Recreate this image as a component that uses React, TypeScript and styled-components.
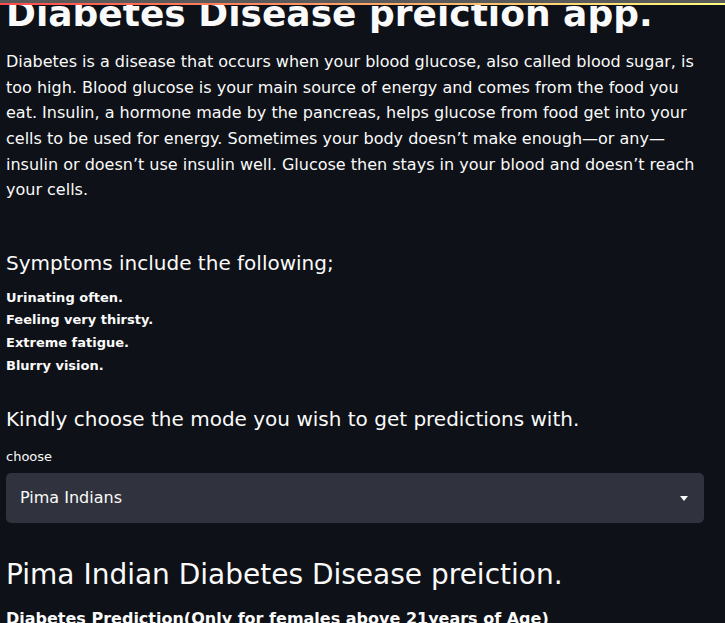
import React from "react";
import styled, { createGlobalStyle } from "styled-components";

const Global = createGlobalStyle`
  html, body { margin: 0; padding: 0; background: #0e1117; }
  body { font-family: "DejaVu Sans", sans-serif; color: #fafafa; overflow: hidden; }
  * { box-sizing: border-box; }
`;

const TopBar = styled.div`
  position: fixed;
  top: 0;
  left: 0;
  right: 0;
  height: 5px;
  background: #5a5a5a;
  z-index: 10;
  &::after {
    content: "";
    position: absolute;
    left: 0;
    right: 0;
    bottom: 0;
    height: 2px;
    background: linear-gradient(90deg, #ff4b4b, #fffd80);
  }
`;

const Main = styled.main`
  display: flex;
  flex-direction: column;
  padding: 0 21px 0 6px;
`;

const Title = styled.h1`
  margin: -8px 0 0;
  font-size: 36px;
  font-weight: 700;
  line-height: 1.2;
`;

const Para = styled.p`
  margin: 14px 0 0;
  font-size: 16px;
  line-height: 25.6px;
`;

const Heading = styled.h3<{ $top: number }>`
  margin: ${(p) => p.$top}px 0 0;
  font-size: 20px;
  font-weight: 400;
  line-height: 1.4;
`;

const Symptoms = styled.ul`
  list-style: none;
  margin: 10px 0 0;
  padding: 0;
  display: flex;
  flex-direction: column;
`;

const Symptom = styled.li`
  font-size: 13px;
  font-weight: 700;
  line-height: 22.7px;
`;

const Label = styled.label`
  margin-top: 15px;
  font-size: 13px;
  line-height: 18px;
`;

const Select = styled.div`
  margin-top: 7px;
  height: 50px;
  border-radius: 5px;
  background: #30323d;
  display: flex;
  align-items: center;
  justify-content: space-between;
  padding: 0 14px;
  font-size: 16px;
`;

const Caret = styled.svg`
  width: 12px;
  height: 12px;
  fill: #fafafa;
`;

const BigHeading = styled.h2`
  margin: 34px 0 0;
  font-size: 28px;
  font-weight: 400;
  line-height: 1.3;
`;

const SubBold = styled.p`
  margin: 13px 0 0;
  font-size: 16px;
  font-weight: 700;
  line-height: 1.6;
`;

export default function App() {
  return (
    <>
      <Global />
      <TopBar />
      <Main>
        <Title>Diabetes Disease preiction app.</Title>
        <Para>
          Diabetes is a disease that occurs when your blood glucose, also called blood sugar, is too high.
          Blood glucose is your main source of energy and comes from the food you eat. Insulin, a hormone
          made by the pancreas, helps glucose from food get into your cells to be used for energy. Sometimes
          your body doesn’t make enough—or any—insulin or doesn’t use insulin well. Glucose then stays in
          your blood and doesn’t reach your cells.
        </Para>
        <Heading $top={46}>Symptoms include the following;</Heading>
        <Symptoms>
          <Symptom>Urinating often.</Symptom>
          <Symptom>Feeling very thirsty.</Symptom>
          <Symptom>Extreme fatigue.</Symptom>
          <Symptom>Blurry vision.</Symptom>
        </Symptoms>
        <Heading $top={27}>Kindly choose the mode you wish to get predictions with.</Heading>
        <Label>choose</Label>
        <Select>
          <span>Pima Indians</span>
          <Caret viewBox="0 0 12 12">
            <path d="M2 4h8l-4 5z" />
          </Caret>
        </Select>
        <BigHeading>Pima Indian Diabetes Disease preiction.</BigHeading>
        <SubBold>Diabetes Prediction(Only for females above 21years of Age)</SubBold>
      </Main>
    </>
  );
}
